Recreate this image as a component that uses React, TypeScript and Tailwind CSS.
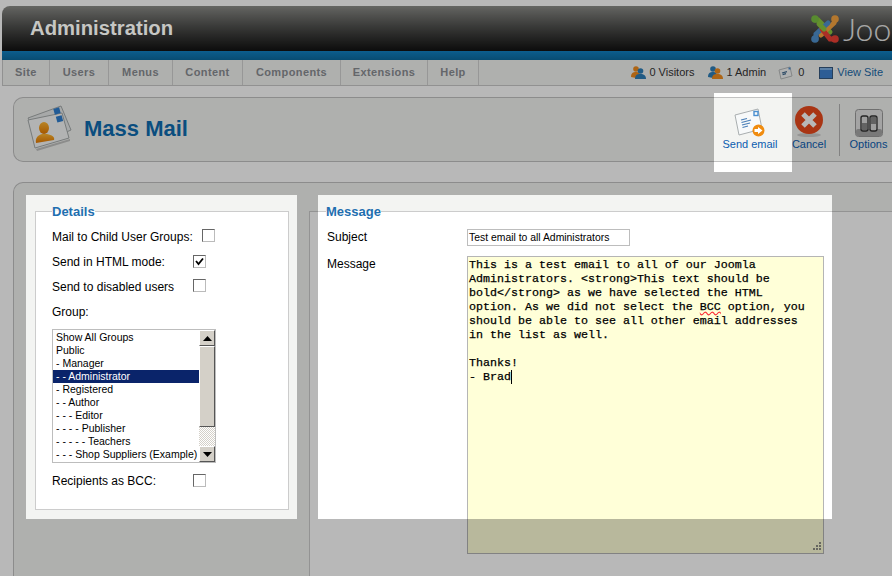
const menuItems = [
  { label: "Site", cls: "w-[47px]" },
  { label: "Users", cls: "w-[59px]" },
  { label: "Menus", cls: "w-[64px]" },
  { label: "Content", cls: "w-[70px]" },
  { label: "Components", cls: "w-[98px]" },
  { label: "Extensions", cls: "w-[87px]" },
  { label: "Help", cls: "w-[51px]" },
];

const groups = [
  "Show All Groups",
  "Public",
  "- Manager",
  "- - Administrator",
  "- Registered",
  "- - Author",
  "- - - Editor",
  "- - - - Publisher",
  "- - - - - Teachers",
  "- - - Shop Suppliers (Example)",
];

function JoomlaLogo() {
  return (
    <svg className="shrink-0" width="30" height="30" viewBox="0 0 30 30" fill="none" strokeWidth="5" strokeLinecap="round">
      <path d="M5 6 L8 6 L20 18" stroke="#8cc63f" />
      <path d="M25 5 L24 9 L11 21" stroke="#f9a541" />
      <path d="M6 25 L6 20 L18 9" stroke="#5091cd" />
      <path d="M25 25 L20 25 L12 15" stroke="#ee4035" />
      <path d="M9 10 L14 15" stroke="#8cc63f" />
      <circle cx="5" cy="5" r="3.8" fill="#7ac143" stroke="none" />
      <circle cx="25" cy="5" r="3.8" fill="#f9a541" stroke="none" />
      <circle cx="5" cy="25" r="3.8" fill="#5091cd" stroke="none" />
      <circle cx="25" cy="25" r="3.8" fill="#ee4035" stroke="none" />
    </svg>
  );
}

function PeopleIcon({ front, back }: { front: string; back: string }) {
  return (
    <svg width="15" height="15" viewBox="0 0 15 15">
      <circle cx="5" cy="4" r="2.8" fill={back} />
      <path d="M0 12 C0 8 2 7 5 7 C8 7 9 8 9 11 L5 13 Z" fill={back} />
      <circle cx="9.5" cy="6" r="2.8" fill={front} />
      <path d="M4 14 C4 10 6 9 9.5 9 C13 9 15 10.5 15 14 Z" fill={front} />
    </svg>
  );
}

function SmallMailIcon() {
  return (
    <svg width="15" height="14" viewBox="0 0 15 14">
      <path d="M1 4 L12 1 L14 10 L3 13 Z" fill="#f4f6f6" stroke="#b8bbbb" />
      <path d="M4 7 L9 5.6 M4.6 8.6 L8 7.6" stroke="#426a8f" strokeWidth="1.2" />
      <rect x="10.5" y="1.5" width="2" height="2" fill="#4f8fcf" />
    </svg>
  );
}

function ScreenIcon() {
  return (
    <svg width="14" height="12" viewBox="0 0 14 12">
      <rect x="0.5" y="0.5" width="13" height="11" fill="#3f82cf" stroke="#35587f" />
      <rect x="1" y="1" width="12" height="2" fill="#7fb2e6" />
    </svg>
  );
}

function MassMailIcon() {
  return (
    <svg className="mb-[6px] shrink-0" width="48" height="48" viewBox="0 0 48 48">
      <defs>
        <linearGradient id="personFill" x1="0" y1="0" x2="0" y2="1">
          <stop offset="0" stopColor="#ffb733" />
          <stop offset="1" stopColor="#e67a00" />
        </linearGradient>
      </defs>
      <path d="M3 15 L36 3 L46 27 L16 40 Z" fill="#e8ebeb" stroke="#a6abab" strokeWidth="1" />
      <path d="M3 17 L37 10 L44 35 L10 45 Z" fill="#f7f9f9" stroke="#a6abab" strokeWidth="1" />
      <path d="M11 46 L45 36 L45 38 L12 48 Z" fill="#000000" opacity="0.2" />
      <rect x="29" y="5" width="6" height="6" transform="rotate(-15 32 8)" fill="#2f7fd0" />
      <rect x="31.5" y="13" width="6" height="6" transform="rotate(-15 34 16)" fill="#2f7fd0" />
      <ellipse cx="19" cy="25" rx="5" ry="6" fill="url(#personFill)" />
      <path d="M11 40 C10 35 13 32 17 31 L22 31 C27 32 30 34 29 37 Z" fill="url(#personFill)" />
    </svg>
  );
}

function SendIcon() {
  return (
    <svg className="mt-[2px]" width="32" height="30" viewBox="0 0 32 30">
      <path d="M1 7 L24 1 L28 21 L5 27 Z" fill="#f7f9fa" stroke="#a9aeb0" />
      <path d="M7 12 L13 10.5 M7.5 14.5 L17 12 M8 17 L16 15 M8.5 19.5 L14 18" stroke="#4a7fb8" strokeWidth="1.2" />
      <rect x="20" y="3.5" width="4" height="4" fill="none" stroke="#4a8fd0" strokeWidth="1.4" />
      <circle cx="24.5" cy="22.5" r="6" fill="#f08c10" />
      <path d="M20.5 21 L24 21 L24 19 L28.5 22.5 L24 26 L24 24 L20.5 24 Z" fill="#ffffff" />
    </svg>
  );
}

function CancelIcon() {
  return (
    <svg width="30" height="32" viewBox="0 0 30 32">
      <ellipse cx="15" cy="29" rx="12" ry="2" fill="#000000" opacity="0.15" />
      <circle cx="15" cy="14" r="14" fill="#ea4a1c" />
      <path d="M9 8 L21 20 M21 8 L9 20" stroke="#ffffff" strokeWidth="5" />
    </svg>
  );
}

function OptionsIcon() {
  return (
    <svg width="28" height="28" viewBox="0 0 28 28">
      <rect x="0.5" y="0.5" width="27" height="27" rx="3" fill="#e4e4e4" stroke="#9a9a9a" />
      <rect x="1" y="20" width="26" height="7" rx="2" fill="#a8a8a8" />
      <rect x="6" y="7" width="7" height="15" rx="2" fill="#dddddd" stroke="#333333" strokeWidth="1.3" />
      <rect x="15" y="7" width="7" height="15" rx="2" fill="#dddddd" stroke="#333333" strokeWidth="1.3" />
      <rect x="7" y="14" width="5" height="7" fill="#8a8a8a" />
      <rect x="16" y="8" width="5" height="7" fill="#8a8a8a" />
    </svg>
  );
}

function Checkbox({ checked, level }: { checked?: boolean; level?: boolean }) {
  return (
    <div
      className={`flex h-[13px] w-[13px] items-center justify-center border border-t-[#666] border-l-[#666] border-r-[#bbb] border-b-[#bbb] bg-white ${level ? "" : "-translate-y-[1px]"}`}
    >
      {checked ? (
        <svg width="9" height="9" viewBox="0 0 9 9">
          <path d="M1 4 L3.5 7 L8 1.5" fill="none" stroke="#000000" strokeWidth="1.8" />
        </svg>
      ) : null}
    </div>
  );
}

function ScrollButton({ up }: { up?: boolean }) {
  return (
    <div className="flex h-[16px] w-[16px] items-center justify-center border border-t-white border-l-white border-r-[#555] border-b-[#555] bg-[#d4d0c8]">
      <svg width="9" height="5" viewBox="0 0 9 5">
        <path d={up ? "M4.5 0 L9 5 L0 5 Z" : "M0 0 L9 0 L4.5 5 Z"} fill="#000000" />
      </svg>
    </div>
  );
}

function ToolButton({ label, width, children }: { label: string; width: string; children: React.ReactNode }) {
  return (
    <div className={`mb-[3px] flex h-[46px] flex-col items-center justify-end ${width}`}>
      <div className="flex flex-1 items-center justify-center pt-[3px]">{children}</div>
      <div className="whitespace-nowrap text-[11px] leading-[13px] text-[#0b5db0]">{label}</div>
    </div>
  );
}

export default function App() {
  return (
    <div className="relative h-[576px] w-[892px] overflow-hidden bg-white font-['Liberation_Sans',Arial,sans-serif] text-[12px] text-black">
      <div className="flex h-full flex-col pl-[2px] pt-[6px]">
        <div className="flex h-[45px] shrink-0 items-center justify-between overflow-hidden rounded-tl-[8px] bg-gradient-to-b from-[#8c8d89] to-[#121212] pl-[28px]">
          <div className="relative z-10 text-[20.3px] font-bold text-[#c6c7c4]">Administration</div>
          <div className="flex w-[82px] shrink-0 items-center gap-[3px]">
            <JoomlaLogo />
            <div className="font-['Lato',sans-serif] text-[32px] font-light leading-[32px] text-[#e8e8e8]">Joo</div>
          </div>
        </div>
        <div className="h-[9px] shrink-0 bg-gradient-to-b from-[#1182c4] to-[#0c6a9e]" />

        <div className="flex h-[26px] shrink-0 items-center justify-between border-b border-l border-[#c9c9c9] bg-[#f3f4f2]">
          <div className="flex h-full">
            {menuItems.map((m) => (
              <div
                key={m.label}
                className={`flex items-center justify-center border-r border-[#d2d2d2] text-[11px] font-bold tracking-[0.4px] text-[#8b8e93] ${m.cls}`}
              >
                {m.label}
              </div>
            ))}
          </div>
          <div className="flex items-center pr-[9px] text-[11px] text-[#333]">
            <PeopleIcon back="#f28c1e" front="#2f7fb8" />
            <span className="ml-[3px]">0 Visitors</span>
            <div className="ml-[14px]">
              <PeopleIcon back="#2f7fb8" front="#f28c1e" />
            </div>
            <span className="ml-[3px]">1 Admin</span>
            <div className="ml-[12px]">
              <SmallMailIcon />
            </div>
            <span className="ml-[5px]">0</span>
            <div className="ml-[15px]">
              <ScreenIcon />
            </div>
            <span className="ml-[4px] text-[#1b6aa8]">View Site</span>
          </div>
        </div>

        <div className="ml-[11px] mt-[11px] flex h-[65px] shrink-0 items-center rounded-l-[10px] border border-r-0 border-[#c2c2c2] bg-[#f3f4f2] pl-[11px]">
          <MassMailIcon />
          <div className="mb-[3px] ml-[11px] text-[22px] font-bold text-[#0f6cb0]">Mass Mail</div>
          <div className="ml-auto flex items-center pr-[5px]">
            <ToolButton label="Send email" width="w-[70px]">
              <SendIcon />
            </ToolButton>
            <ToolButton label="Cancel" width="w-[48px]">
              <CancelIcon />
            </ToolButton>
            <div className="ml-[6px] h-[52px] w-px bg-[#b5b5b5]" />
            <ToolButton label="Options" width="ml-[10px] w-[37px]">
              <OptionsIcon />
            </ToolButton>
          </div>
        </div>

        <div className="ml-[11px] mt-[20px] flex min-h-0 flex-1 items-start gap-[20px] rounded-tl-[10px] border-l border-t border-[#c2c2c2] bg-[#f3f4f2] pl-[21px] pt-[21px]">
          <fieldset className="h-[306px] w-[254px] shrink-0 border border-[#cccccc] bg-white pl-[16px]">
            <legend className="text-[13px] font-bold leading-[15px] text-[#1f6fb0]">Details</legend>
            <div className="mt-[5px] flex h-[25px] items-center">
              <div className="w-[150px]">Mail to Child User Groups:</div>
              <Checkbox />
            </div>
            <div className="flex h-[25px] items-center">
              <div className="w-[141px]">Send in HTML mode:</div>
              <Checkbox checked level />
            </div>
            <div className="flex h-[25px] items-center">
              <div className="w-[141px]">Send to disabled users</div>
              <Checkbox />
            </div>
            <div className="flex h-[25px] items-center">Group:</div>
            <div className="mt-[5px] flex h-[134px] w-[164px] border border-[#bdbdbd]">
              <div className="min-w-0 flex-1 overflow-hidden whitespace-nowrap pt-[1px] text-[10.5px] leading-[13px]">
                {groups.map((g) => (
                  <div
                    key={g}
                    className={`h-[13px] pl-[3px] ${g === "- - Administrator" ? "bg-[#0a246a] text-white" : ""}`}
                  >
                    {g}
                  </div>
                ))}
              </div>
              <div className="flex w-[16px] shrink-0 flex-col">
                <ScrollButton up />
                <div className="h-[81px] border border-t-white border-l-white border-r-[#555] border-b-[#555] bg-[#d4d0c8]" />
                <div className="flex-1 bg-[repeating-conic-gradient(#ffffff_0%_25%,#d4d0c8_0%_50%)] bg-[length:2px_2px]" />
                <ScrollButton />
              </div>
            </div>
            <div className="mt-[6px] flex h-[24px] items-center">
              <div className="w-[141px]">Recipients as BCC:</div>
              <Checkbox />
            </div>
          </fieldset>

          <fieldset className="h-[500px] w-[640px] shrink-0 border border-[#cccccc] bg-white pl-[17px]">
            <legend className="-ml-[1px] text-[13px] font-bold leading-[15px] text-[#1f6fb0]">Message</legend>
            <div className="mt-[10px] flex">
              <div className="w-[140px] pt-[1px] leading-[14px]">Subject</div>
              <div className="h-[17px] w-[163px] border border-[#bdbdbd] pl-[1px] text-[10.4px] leading-[16px]">
                Test email to all Administrators
              </div>
            </div>
            <div className="mt-[10px] flex">
              <div className="w-[140px] pt-[1px] leading-[14px]">Message</div>
              <div className="relative h-[298px] w-[357px] whitespace-pre border border-[#b5b5b5] bg-[#ffffd8] pl-[1px] pt-[1px] font-['Liberation_Mono','Courier_New',monospace] text-[11.67px] leading-[14px] [-webkit-text-stroke:0.25px_black]">
                {"This is a test email to all of our Joomla\nAdministrators. <strong>This text should be\nbold</strong> as we have selected the HTML\noption. As we did not select the "}
                <span className="underline decoration-red-500 decoration-wavy">BCC</span>
                {" option, you\nshould be able to see all other email addresses\nin the list as well.\n\nThanks!\n- Brad"}
                <span className="inline-block h-[14px] w-px bg-black align-top" />
                <svg className="absolute bottom-[1px] right-[1px]" width="11" height="11" viewBox="0 0 11 11">
                  <path d="M8 1h2v2H8zM5 4h2v2H5zM8 4h2v2H8zM2 7h2v2H2zM5 7h2v2H5zM8 7h2v2H8z" fill="#8f8f86" />
                </svg>
              </div>
            </div>
          </fieldset>
        </div>
      </div>

      <div className="absolute left-0 top-0 h-[93px] w-[892px] bg-black/[0.28]" />
      <div className="absolute left-0 top-[93px] h-[79px] w-[714px] bg-black/[0.28]" />
      <div className="absolute left-[792px] top-[93px] h-[79px] w-[100px] bg-black/[0.28]" />
      <div className="absolute left-0 top-[172px] h-[23px] w-[892px] bg-black/[0.28]" />
      <div className="absolute left-0 top-[195px] h-[324px] w-[26px] bg-black/[0.28]" />
      <div className="absolute left-[297px] top-[195px] h-[324px] w-[21px] bg-black/[0.28]" />
      <div className="absolute left-[832px] top-[195px] h-[324px] w-[60px] bg-black/[0.28]" />
      <div className="absolute left-0 top-[519px] h-[57px] w-[892px] bg-black/[0.28]" />
    </div>
  );
}
